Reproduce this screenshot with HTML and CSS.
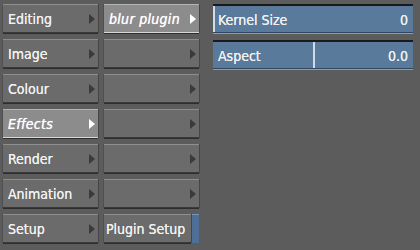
FILE: index.html
```html
<!DOCTYPE html>
<html lang="en">
<head>
    <meta charset="UTF-8">
    <title>Effects</title>
    <link rel="stylesheet" href="styles.css">
</head>
<body>
    <div class="panel">
        <!-- main menu -->
        <div class="menu">
            <div class="btn"><span>Editing</span><i class="arrow"></i></div>
            <div class="btn"><span>Image</span><i class="arrow"></i></div>
            <div class="btn"><span>Colour</span><i class="arrow"></i></div>
            <div class="btn on"><span class="it">Effects</span><i class="arrow"></i></div>
            <div class="btn"><span>Render</span><i class="arrow"></i></div>
            <div class="btn"><span>Animation</span><i class="arrow"></i></div>
            <div class="btn"><span>Setup</span><i class="arrow"></i></div>
        </div>

        <!-- plugin list -->
        <div class="menu">
            <div class="btn on"><span class="it">blur plugin</span><i class="arrow"></i></div>
            <div class="btn"><span></span><i class="arrow"></i></div>
            <div class="btn"><span></span><i class="arrow"></i></div>
            <div class="btn"><span></span><i class="arrow"></i></div>
            <div class="btn"><span></span><i class="arrow"></i></div>
            <div class="btn"><span></span><i class="arrow"></i></div>
            <div class="setup-row">
                <div class="btn plain"><span>Plugin Setup</span></div>
                <div class="strip"></div>
            </div>
        </div>

        <!-- parameters -->
        <div class="params">
            <div class="field">
                <div class="fill" style="width:0%"></div>
                <span class="label">Kernel Size</span>
                <span class="value">0</span>
            </div>
            <div class="field">
                <div class="fill" style="width:50%"></div>
                <span class="label">Aspect</span>
                <span class="value">0.0</span>
            </div>
        </div>
    </div>
</body>
</html>
```

FILE: styles.css
```css
body {
    margin: 0;
    background: #5c5c5c;
    font-family: "DejaVu Sans Condensed", "DejaVu Sans", sans-serif;
    font-stretch: condensed;
    color: #f0f0f0;
}
.panel {
    display: flex;
    padding: 4px 3px;
    gap: 6px;
}
.menu {
    display: flex;
    flex-direction: column;
    gap: 6px;
    width: 95px;
}
.btn {
    box-sizing: border-box;
    height: 29px;
    display: flex;
    align-items: center;
    justify-content: space-between;
    padding: 1px 3px 0 5px;
    background: #6b6b6b;
    border-top: 1px solid #8e8e8e;
    border-bottom: 1px solid #3a3a3a;
    box-shadow: 0 1px 0 #2e2e2e, 1px 0 0 #454545, -1px 0 0 #505050;
    font-size: 14px;
    line-height: 1;
    white-space: nowrap;
    text-shadow: 0 0 0.5px #ffffff;
}
.btn.on {
    background: #8c8c8c;
    border-top-color: #b4b4b4;
    border-bottom-color: #d8d8d8;
    color: #ffffff;
}
.it {
    font-style: italic;
    letter-spacing: 0.3px;
    text-shadow: 0 0 0.7px #ffffff;
}
.arrow {
    width: 0;
    height: 0;
    margin-top: -1px;
    border-top: 5px solid transparent;
    border-bottom: 5px solid transparent;
    border-left: 6px solid #3a3a3a;
}
.btn.on .arrow {
    border-left-color: #ffffff;
}
.setup-row {
    display: flex;
    gap: 1px;
}
.btn.plain {
    flex: 1;
    padding: 1px 0 0 2px;
}
.strip {
    width: 7px;
    background: #4d6f98;
    border-top: 1px solid #7a95b8;
}
.params {
    display: flex;
    flex-direction: column;
    gap: 7px;
    margin-left: 8px;
    width: 200px;
}
.field {
    position: relative;
    box-sizing: border-box;
    height: 29px;
    display: flex;
    align-items: center;
    justify-content: space-between;
    padding: 2px 5px 0 5px;
    background: #5a7a9c;
    border-top: 2px solid #1a1a1a;
    border-bottom: 1px solid #2e4866;
    box-shadow: 0 1px 0 #9a9a9a;
    font-size: 14px;
    text-shadow: 0 0 0.5px #ffffff;
}
.fill {
    position: absolute;
    left: 0;
    top: 0;
    bottom: 0;
    border-right: 2px solid #d0dcea;
}
.label,
.value {
    position: relative;
}
```
